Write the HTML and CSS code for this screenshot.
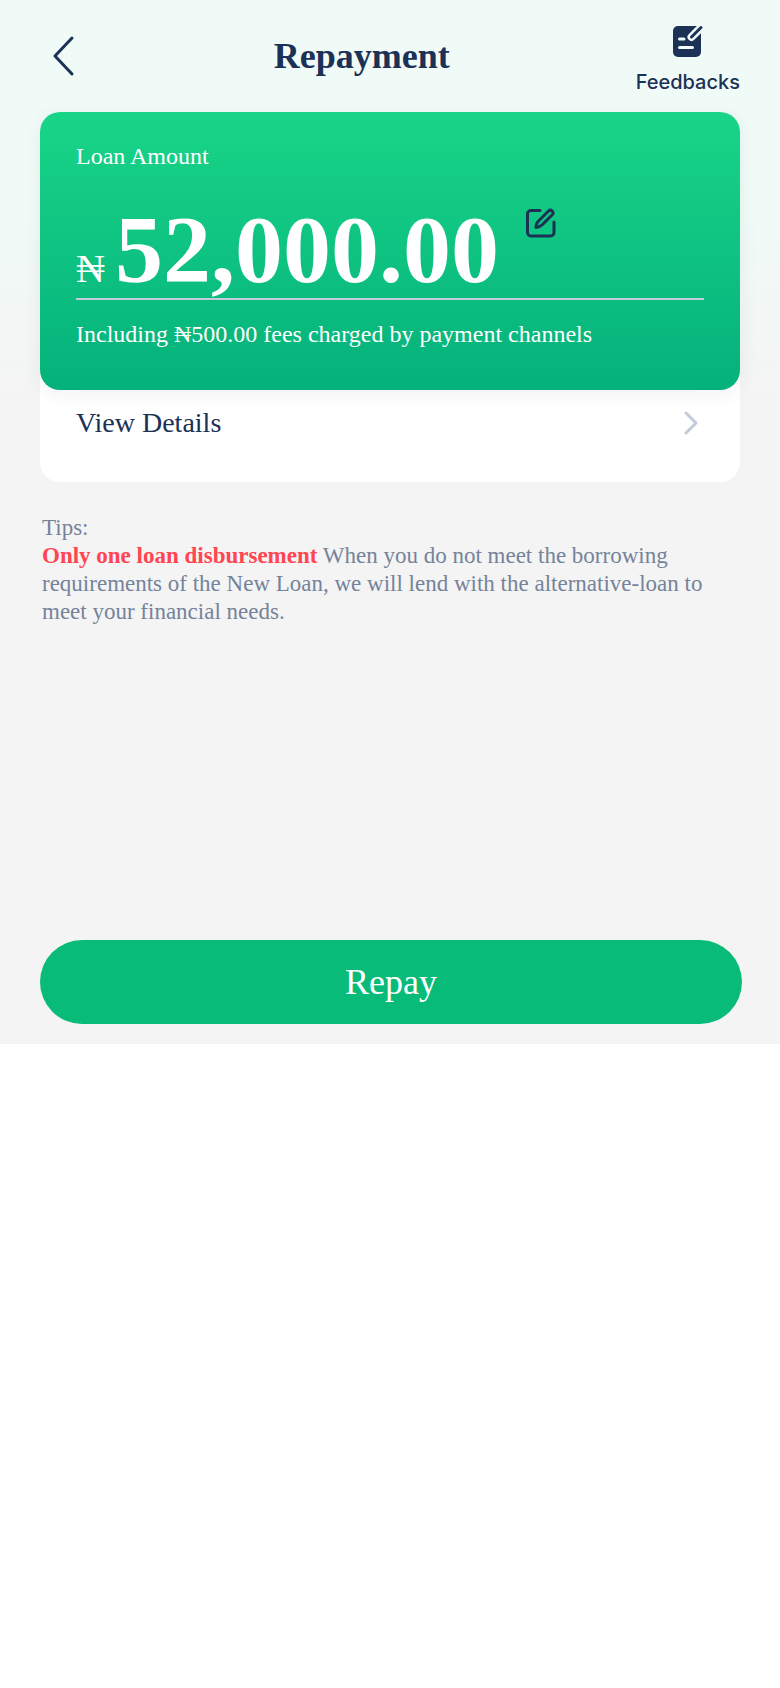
FILE: index.html
```html
<!DOCTYPE html>
<html lang="en">
<head>
  <meta charset="utf-8">
  <meta name="viewport" content="width=device-width, initial-scale=1">
  <title>Repayment</title>
  <link rel="stylesheet" href="styles.css">
</head>

<body>
<div class="page">
  <header class="header">
    <button class="back" type="button" aria-label="Back">
      <svg width="48" height="48" viewBox="0 0 48 48"><path d="M32 6 L15 24 L32 42"/></svg>
    </button>
    <h1 class="title">Repayment</h1>
    <a class="feedback" href="#">
      <svg width="30" height="34" viewBox="0 0 30 34">
        <path class="sheet" d="M5 2H24L28 6V28a5 5 0 0 1-5 5H5a5 5 0 0 1-5-5V7a5 5 0 0 1 5-5z"/>
        <path class="cut" d="M18.500 13 L29 2.500"/>
        <path class="pen" d="M18.500 13 L28 3.500"/>
        <path class="line" d="M6.500 15H11M6.500 23.500H19.500"/>
      </svg>
      <span>Feedbacks</span>
    </a>
  </header>

  <main class="content">
    <section class="box">
      <div class="card">
        <p class="label">Loan Amount</p>
        <div class="amount">
          <span class="currency">₦</span>
          <span class="number">52,000.00</span>
          <button class="edit" type="button" aria-label="Edit amount">
            <svg width="32" height="32" viewBox="0 0 32 32">
              <path d="M15 3.500H6A3.500 3.500 0 0 0 2.500 7V25.500A3.500 3.500 0 0 0 6 29H25.500A3.500 3.500 0 0 0 29 25.500V15"/>
              <path d="M11 20.500C11 17.500 12 15.500 13.500 14L23.500 4Q25.300 2.300 27.200 4.100Q29 6 27.300 7.800L17.500 17.500C16 19 14 20.300 11 20.500z"/>
            </svg>
          </button>
        </div>
        <p class="fees">Including ₦500.00 fees charged by payment channels</p>
      </div>
      <a class="details" href="#">
        <span>View Details</span>
        <svg width="14" height="24" viewBox="0 0 14 24"><path d="M2 2 L12 12 L2 22"/></svg>
      </a>
    </section>

    <section class="tips">
      <p>Tips:</p>
      <p><strong>Only one loan disbursement</strong> When you do not meet the borrowing requirements of the New Loan, we will lend with the alternative-loan to meet your financial needs.</p>
    </section>
  </main>

  <footer class="footer">
    <button class="repay" type="button">Repay</button>
  </footer>
</div>
</body>
</html>
```

FILE: styles.css
```css
* {box-sizing: border-box;}
body {margin: 0; background: #fff; color: #1b3155; font-family: "Liberation Serif", "Times New Roman", serif;}
h1, p {margin: 0;}
button {padding: 0; border: 0; background: none; font-family: inherit; cursor: pointer;}
a {color: inherit; text-decoration: none;}
svg {display: block; fill: none; stroke-linecap: round; stroke-linejoin: round;}

.page {
  display: flex;
  flex-direction: column;
  min-height: 1044px;
  background: linear-gradient(#f0faf7 0, #f0faf7 220px, #f4f4f4 400px);
}

/* top bar */
.header {display: flex; align-items: center; justify-content: space-between; height: 112px; padding: 0 40px;}
.back svg {stroke: #1b3155; stroke-width: 3;}
.title {font-size: 36px; line-height: 40px;}
.feedback {display: flex; flex-direction: column; align-items: center; gap: 12px; padding-top: 6px; font: 500 20px/24px Inter, Roboto, sans-serif;}
.sheet {fill: #1b3155;}
.cut {stroke: #f0faf7; stroke-width: 8;}
.pen {stroke: #1b3155; stroke-width: 3;}
.line {stroke: #f0faf7; stroke-width: 3;}

/* loan card */
.content {flex: 1; padding: 0 40px;}
.box {border-radius: 20px; background: #fff;}
.card {
  padding: 30px 36px 42px;
  border-radius: 20px;
  background: linear-gradient(#19d588, #04b17b);
  box-shadow: 0 4px 20px rgba(0, 0, 0, 0.06);
  color: #fff;
}
.label, .fees {font-size: 24px; line-height: 28px;}
.amount {display: flex; align-items: baseline; margin: 32px 0 20px; border-bottom: 2px solid #c3cad9;}
.currency {font-size: 40px; line-height: 40px;}
.number {margin-left: 10px; font-size: 96px; font-weight: bold; line-height: 96px;}
.edit {align-self: flex-start; margin: 5px 0 0 26px;}
.edit svg {stroke: #1b3155; stroke-width: 3;}
.details {display: flex; align-items: center; justify-content: space-between; padding: 16px 42px 42px 36px; font-size: 28px; line-height: 34px;}
.details svg {stroke: #c3cad9; stroke-width: 3;}

.tips {padding: 32px 2px; color: #75839a; font-size: 23px; line-height: 28px;}
.tips strong {color: #ff4551;}

.footer {padding: 20px 38px 20px 40px;}
.repay {width: 100%; height: 84px; border-radius: 42px; background: #09bb79; color: #fff; font-size: 36px;}
```
